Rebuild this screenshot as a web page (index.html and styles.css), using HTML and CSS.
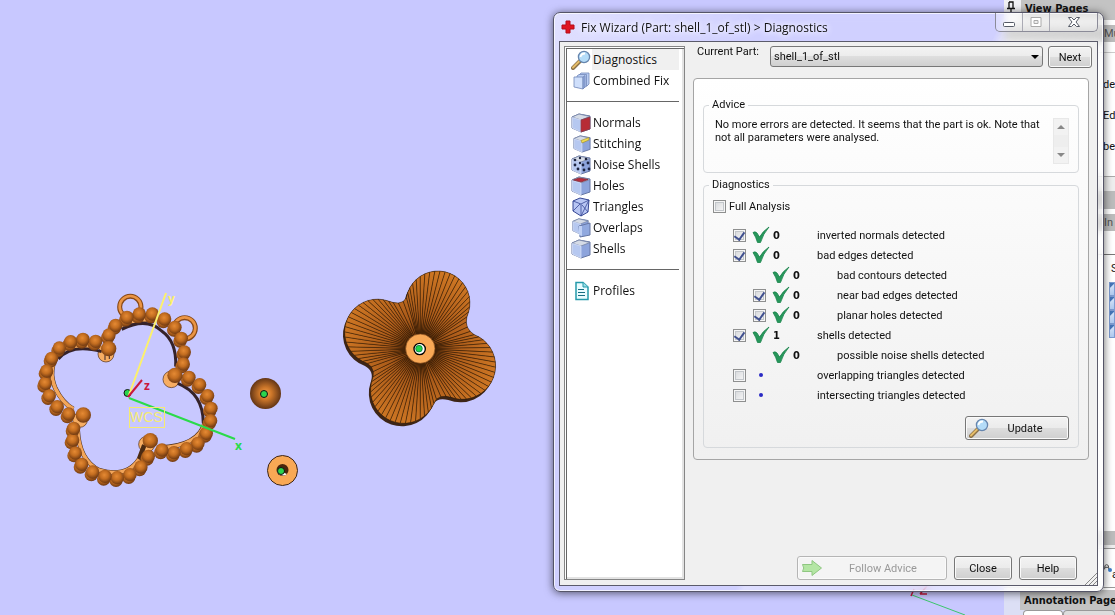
FILE: index.html
```
<!DOCTYPE html>
<html lang="en">
<head>
    <meta charset="UTF-8">
    <meta name="viewport" content="width=device-width, initial-scale=1.0">
    <title>Fix Wizard</title>
    <link rel="stylesheet" href="styles.css">
</head>
<body>
    <svg class="sprites" aria-hidden="true">
        <symbol id="magnifier" viewBox="0 0 20 20">
            <path d="M2 18 L9 11" stroke="#8a7048" stroke-width="4" stroke-linecap="round"/>
            <path d="M2 17.5 L8.5 11" stroke="#e6bd68" stroke-width="2" stroke-linecap="round"/>
            <circle cx="13" cy="7" r="5.6" fill="#b4dcf8" stroke="#6685ad" stroke-width="1.3"/>
            <path d="M9.5 7 Q10 3.5 14 3.5" stroke="#fff" stroke-width="1.8" fill="none"/>
        </symbol>
        <symbol id="cube" viewBox="0 0 20 20">
            <path d="M1 4 L8 1 L19 3 V16 L10 19 L1 15 Z" fill="#8da4dc" stroke="#6677a4"/>
            <path d="M1 4 L8 1 L19 3.5 L10 7 Z" fill="#d5dbe6" stroke="#7684a5" stroke-width=".8"/>
            <path d="M1.500 4.500 L10 7 V19 L1.500 15 Z" fill="#b6c8f0" stroke="#e8efff" stroke-width=".6"/>
        </symbol>
        <symbol id="check" viewBox="0 0 18 18">
            <path d="M1 6.500 Q3 5 5 7 L7.500 11 Q11 5 17 1 Q11 8 8.500 16.500 H5.500 Q4 11 1 6.500 Z" fill="#27975b" stroke="#16834a" stroke-width=".8"/>
        </symbol>
    </svg>

    <main class="workspace">
        <svg class="scene" role="img" aria-label="3D model view">
            <defs>
                <radialGradient id="bead" cx=".45" cy=".4" r=".6">
                    <stop offset="0" stop-color="#e58a34"/>
                    <stop offset=".5" stop-color="#c36d20"/>
                    <stop offset="1" stop-color="#713a12"/>
                </radialGradient>
                <radialGradient id="ball">
                    <stop offset="0" stop-color="#f5a04c"/>
                    <stop offset=".4" stop-color="#cc7629"/>
                    <stop offset="1" stop-color="#633515"/>
                </radialGradient>
                <radialGradient id="petal" gradientUnits="userSpaceOnUse" cx="556" cy="251" r="245">
                    <stop offset="0" stop-color="#572a08"/>
                    <stop offset=".4" stop-color="#ab5b1a"/>
                    <stop offset="1" stop-color="#d07824"/>
                </radialGradient>
            </defs>

            <!-- clover pendant made of beads -->
            <g transform="translate(30 265) scale(.3333)">
                <g fill="none" stroke="#874817" stroke-width="15">
                    <circle cx="301" cy="126" r="32"/>
                    <circle cx="464" cy="190" r="32"/>
                </g>
                <g fill="none" stroke="#ea9444" stroke-width="8">
                    <circle cx="301" cy="125" r="32"/>
                    <circle cx="464" cy="189" r="32"/>
                </g>
                <g fill="#f7ad62" stroke="#4b2a12" stroke-width="2">
                    <circle cx="228" cy="267" r="24"/>
                    <circle cx="424" cy="343" r="25"/>
                    <circle cx="350" cy="538" r="24"/>
                    <circle cx="150" cy="465" r="22"/>
                </g>
                <!-- thin dark edge, then the light inner wall -->
                <g fill="none" stroke="#4b2a12" stroke-width="14">
                    <path d="M85 265 Q52 315 76 370 Q98 415 130 432"/>
                    <path d="M143 495 Q147 585 208 616 Q290 640 327 583 L343 540"/>
                    <path d="M242 205 Q280 165 350 164"/>
                    <path d="M526 470 Q507 544 390 548"/>
                </g>
                <g fill="none" stroke="#f3a65a" stroke-width="11">
                    <path d="M85 265 Q52 315 76 370 Q98 415 130 432"/>
                    <path d="M143 495 Q147 585 208 616 Q290 640 327 583"/>
                    <path d="M242 205 Q280 165 350 164"/>
                    <path d="M526 470 Q507 544 390 548"/>
                    <path d="M85 262 Q140 232 215 248"/>
                </g>
                <g fill="none" stroke="#352229" stroke-width="9">
                    <path d="M85 282 Q125 235 215 260"/>
                    <path d="M275 193 Q350 155 395 198 Q441 230 437 305"/>
                    <path d="M443 355 Q520 385 520 475"/>
                    <path d="M225 270 V285 M238 265 V282" stroke-width="3"/>
                </g>
                <g id="beads"></g>
            </g>

            <!-- ribbed clover -->
            <g transform="translate(235 265) scale(.3333)">
                <use href="#clover" x="-5" y="9" fill="#3d2517"/>
                <path id="clover" fill="inherit" d="M460 108 Q500 124 514 99 A96 96 0 1 1 697 152 Q685 188 718 209 A98 98 0 1 1 645 396 Q612 388 600 408 A97 97 0 1 1 412 343 Q424 310 395 294 A98 98 0 1 1 460 108 Z"/>
                <g id="ribs"></g>
                <circle cx="556" cy="251" r="44" fill="#f8a855" stroke="#7c4519" stroke-width="2"/>
                <circle cx="554" cy="252" r="17" fill="#fff" stroke="#000" stroke-width="4"/>
                <circle cx="552" cy="251" r="10" fill="#21d44b" stroke="#063" stroke-width="2"/>
            </g>

            <circle cx="265.500" cy="393.500" r="15.500" fill="url(#ball)"/>
            <circle cx="264" cy="394" r="3.500" fill="#2ad44e" stroke="#111"/>
            <circle cx="282.500" cy="470.500" r="15" fill="#f8a855" stroke="#3d2517"/>
            <circle cx="282.500" cy="470" r="6" fill="#4a240c"/>
            <path d="M277 470 A6 6 0 0 0 287 474 Z" fill="#fff"/>
            <circle cx="281" cy="471" r="3.500" fill="#2ad44e" stroke="#111"/>

            <!-- axes -->
            <circle cx="127.500" cy="393" r="3.500" fill="#2ad44e" stroke="#111"/>
            <path d="M129 395 L166 293" stroke="#fdf16b" stroke-width="2"/>
            <path d="M129 398 L235 439" stroke="#2adb49" stroke-width="2"/>
            <path d="M128 397 L142 380" stroke="#c9183c" stroke-width="2"/>
            <rect x="129.500" y="407.500" width="35" height="20" fill="none" stroke="#f6eb72"/>
            <text x="130" y="422" class="wcs">WCS</text>
            <text x="168" y="303" class="axis axis-y">y</text>
            <text x="235" y="450" class="axis axis-x">x</text>
            <text x="144" y="390" class="axis axis-z">z</text>
            <path d="M912 595 L965 615" stroke="#3cc66c"/>
            <path d="M911 596 L914 589 M920 594 H927 M920 594 L927 586" stroke="#c9183c" fill="none" stroke-width="1.500"/>
        </svg>

        <aside class="pages">
            <div class="pages-head">
                <svg class="pin" viewBox="0 0 8 12"><path d="M2 1 H6 V7 M2 1 V7 M0 7.500 H8 M4 8 V12" fill="none" stroke="#111" stroke-width="1.300"/></svg>
                <h2>View Pages</h2>
            </div>
            <div class="tab">Mu</div>
            <ul class="options">
                <li>de</li>
                <li>Ed</li>
                <li>bec</li>
            </ul>
            <div class="band"></div>
            <div class="tab">In</div>
            <div class="column-head">S</div>
            <div class="thumbs"><i></i><i></i><i></i><i></i></div>
            <div class="band band-bottom"></div>
            <div class="tools">
                <svg class="tool" viewBox="0 0 12 12"><path d="M1 8 V5 Q1 1 4 1 T7 5 V8 M1 5 H7" fill="none" stroke="#555" stroke-width="1.500"/><circle cx="9" cy="9" r="3" fill="#3f7fc9"/></svg>
                <span>a</span>
            </div>
            <div class="pages-head annotation"><h2>Annotation Page</h2></div>
            <div class="annotation-tabs"><i></i><i></i></div>
        </aside>
    </main>

    <section class="dialog" aria-labelledby="dialog-title">
        <header class="titlebar">
            <svg class="cross" viewBox="0 0 14 14"><path d="M5 1 H9 V5 H13 V9 H9 V13 H5 V9 H1 V5 H5 Z" fill="#e01420" stroke="#b30d18" stroke-linejoin="round"/></svg>
            <h1 id="dialog-title">Fix Wizard (Part: shell_1_of_stl) &gt; Diagnostics</h1>
            <div class="window-buttons">
                <button type="button" aria-label="Minimize"><svg viewBox="0 0 14 12"><rect x="1.500" y="6.500" width="11" height="4" rx="1" fill="#fff" stroke="#555a66"/></svg></button>
                <button type="button" aria-label="Maximize" disabled><svg viewBox="0 0 14 12"><path d="M2 1.500 H12 V10.500 H2 Z M5 4.500 H9 V7.500 H5 Z" fill="#fff" stroke="#aaa" fill-rule="evenodd"/></svg></button>
                <button type="button" class="close" aria-label="Close window"><svg viewBox="0 0 14 12"><path d="M1.500 1.500 H4.500 L7 4 L9.500 1.500 H12.500 L9 6 L12.500 10.500 H9.500 L7 8 L4.500 10.500 H1.500 L5 6 Z" fill="#fff" stroke="#555a66"/></svg></button>
            </div>
        </header>

        <div class="client">
            <nav class="sidebar">
                <a href="#diagnostics" class="active"><svg viewBox="0 0 20 20"><use href="#magnifier"/></svg><span>Diagnostics</span></a>
                <a href="#combined">
                    <svg viewBox="0 0 20 20">
                        <g fill="#b9cdf3" stroke="#7288b9" stroke-width=".8">
                            <path d="M8 4 L10 2 H18 V13 L16 15 H8 Z"/>
                            <path d="M6 5 L8 3.500 H15.500 V15 L14 16.500 H6 Z"/>
                            <path d="M3 6 H12 V18 L3 16 Z" fill="#cfdffb"/>
                            <path d="M12 6 L14 4.500 V16 L12 18 Z" fill="#90a8dc"/>
                        </g>
                    </svg>
                    <span>Combined Fix</span>
                </a>
                <hr>
                <a href="#normals"><svg viewBox="0 0 20 20"><use href="#cube"/><path d="M10 7 L19 4 V16 L10 19 Z" fill="#b72c35" stroke="#8c3c4b" stroke-width=".8"/></svg><span>Normals</span></a>
                <a href="#stitching"><svg viewBox="0 0 20 20"><use href="#cube" x="2" y="1" width="18" height="18"/><path d="M10 6.500 L18 3.500 V6 L11 9 Z" fill="#f0dc54" stroke="#9c8828" stroke-width=".6"/></svg><span>Stitching</span></a>
                <a href="#noise"><svg viewBox="0 0 20 20"><use href="#cube"/><g fill="#1d2440"><circle cx="4" cy="5" r="1.300"/><circle cx="9" cy="3" r="1.200"/><circle cx="15" cy="4" r="1.300"/><circle cx="4" cy="10" r="1.400"/><circle cx="7" cy="14" r="1.400"/><circle cx="12" cy="10" r="1.400"/><circle cx="17" cy="8" r="1.400"/><circle cx="13" cy="15" r="1.400"/><circle cx="18" cy="14" r="1.400"/><circle cx="9" cy="8" r="1.200"/></g></svg><span>Noise Shells</span></a>
                <a href="#holes"><svg viewBox="0 0 20 20"><use href="#cube"/><path d="M2.500 4 L8 2 L17 3.500 L10 6 Z" fill="#b82c3b" stroke="#812b3b" stroke-width=".8"/></svg><span>Holes</span></a>
                <a href="#triangles"><svg viewBox="0 0 20 20"><path d="M2 4 L9 1 L18 3 L17 15 L10 19 L2 14 Z" fill="#b8c6f3" stroke="#354694"/><path d="M2 4 L10 7 L18 3 M10 7 V19 M2 14 L9 7 M11 8 L17 15 M10 19 L18 3" stroke="#354694" fill="none" stroke-width=".8"/></svg><span>Triangles</span></a>
                <a href="#overlaps"><svg viewBox="0 0 20 20"><use href="#cube" x="1" y="0" width="17" height="17"/><path d="M8 8 L19 5 V17 L9 19 Z" fill="#91a9df" stroke="#6677a4"/><path d="M8 8 L11 8 V18 L8 17 Z" fill="#bfd0f4"/></svg><span>Overlaps</span></a>
                <a href="#shells"><svg viewBox="0 0 20 20"><use href="#cube"/></svg><span>Shells</span></a>
                <hr>
                <a href="#profiles"><svg viewBox="0 0 20 20"><path d="M5 1.500 H12 L17 6 V18.500 H5 Z" fill="#e9fcff" stroke="#259aab" stroke-width="1.500"/><path d="M12 1.500 V6 H17" fill="#9ce0e8" stroke="#259aab"/><path d="M7 8.500 H13 M7 11.500 H14 M7 14.500 H14" stroke="#176e82" stroke-width="1.200"/></svg><span>Profiles</span></a>
            </nav>

            <div class="content">
                <div class="part-row">
                    <label for="part">Current Part:</label>
                    <div class="select-wrap">
                        <select id="part"><option>shell_1_of_stl</option></select>
                    </div>
                    <button type="button" class="btn">Next</button>
                </div>

                <div class="panel">
                    <fieldset>
                        <legend>Advice</legend>
                        <div class="advice">
                            <p>No more errors are detected. It seems that the part is ok. Note that not all parameters were analysed.</p>
                            <div class="scroller">
                                <button type="button" class="up" aria-label="Scroll up"></button>
                                <button type="button" class="down" aria-label="Scroll down"></button>
                            </div>
                        </div>
                    </fieldset>

                    <fieldset>
                        <legend>Diagnostics</legend>
                        <div class="full"><input type="checkbox" id="full"><label for="full">Full Analysis</label></div>
                        <ul class="results">
                            <li><input type="checkbox" id="normals" checked><svg viewBox="0 0 18 18"><use href="#check"/></svg><b>0</b><label for="normals">inverted normals detected</label></li>
                            <li><input type="checkbox" id="edges" checked><svg viewBox="0 0 18 18"><use href="#check"/></svg><b>0</b><label for="edges">bad edges detected</label></li>
                            <li class="sub"><i></i><svg viewBox="0 0 18 18"><use href="#check"/></svg><b>0</b><span>bad contours detected</span></li>
                            <li class="sub"><input type="checkbox" id="near" checked><svg viewBox="0 0 18 18"><use href="#check"/></svg><b>0</b><label for="near">near bad edges detected</label></li>
                            <li class="sub"><input type="checkbox" id="planar" checked><svg viewBox="0 0 18 18"><use href="#check"/></svg><b>0</b><label for="planar">planar holes detected</label></li>
                            <li><input type="checkbox" id="shells" checked><svg viewBox="0 0 18 18"><use href="#check"/></svg><b>1</b><label for="shells">shells detected</label></li>
                            <li class="sub"><i></i><svg viewBox="0 0 18 18"><use href="#check"/></svg><b>0</b><span>possible noise shells detected</span></li>
                            <li><input type="checkbox" id="overlapping"><i class="dot"></i><b></b><label for="overlapping">overlapping triangles detected</label></li>
                            <li><input type="checkbox" id="intersecting"><i class="dot"></i><b></b><label for="intersecting">intersecting triangles detected</label></li>
                        </ul>
                        <button type="button" class="btn update"><svg viewBox="0 0 20 20"><use href="#magnifier"/></svg><span>Update</span></button>
                    </fieldset>
                </div>

                <div class="actions">
                    <button type="button" class="btn follow" disabled>
                        <svg viewBox="0 0 22 18"><path d="M1.500 5.500 H11 V1.500 L20.500 9 L11 16.500 V12.500 H1.500 Q4 9 1.500 5.500 Z" fill="#b4e6a4" stroke="#8fc781"/></svg>
                        <span>Follow Advice</span>
                    </button>
                    <button type="button" class="btn">Close</button>
                    <button type="button" class="btn">Help</button>
                </div>
            </div>
            <svg class="grip" viewBox="0 0 12 12"><path d="M0 12 L12 0 M4 12 L12 4 M8 12 L12 8" stroke="#888"/></svg>
        </div>
    </section>

    <script>
        const SVG = 'http://www.w3.org/2000/svg';

        function add(parent, tag, attrs) {
            const el = document.createElementNS(SVG, tag);
            for (const key in attrs) {
                el.setAttribute(key, attrs[key]);
            }
            parent.appendChild(el);
        }

        // bead centres: x, y and a radius for the big corner ones
        const beads = [
            [328, 147], [367, 147], [404, 162], [435, 187], [454, 220], [463, 261], [460, 297],
            [477, 337], [509, 359], [533, 392], [543, 430], [542, 467], [529, 505],
            [504, 535], [470, 551], [432, 563], [396, 555], [355, 574], [333, 606], [300, 629],
            [262, 638], [225, 634], [188, 621], [155, 598], [136, 564], [128, 525], [131, 490],
            [116, 447], [82, 425], [58, 392], [46, 355], [50, 318], [65, 280],
            [88, 249], [122, 230], [159, 223], [197, 229], [237, 210], [257, 181], [291, 157],
            [435, 331, 23], [361, 527, 23], [160, 450, 23], [236, 251, 23]
        ];
        const beadGroup = document.getElementById('beads');
        beads.forEach(([x, y, r]) => {
            if (!r) add(beadGroup, 'circle', { cx: x - 4, cy: y + 8, r: 20, fill: 'url(#bead)' });
        });
        beads.forEach(([x, y, r]) => {
            add(beadGroup, 'circle', { cx: x, cy: y, r: r || 20, fill: 'url(#bead)' });
        });

        // ribs run from the hub to evenly spaced points of the outline
        const clover = document.getElementById('clover');
        const ribs = document.getElementById('ribs');
        const count = 96;
        const step = clover.getTotalLength() / count;
        for (let i = 0; i < count; i++) {
            const a = clover.getPointAtLength(i * step);
            const b = clover.getPointAtLength((i + 1) * step);
            add(ribs, 'path', {
                d: `M556 251 L${a.x} ${a.y} L${b.x} ${b.y} Z`,
                fill: 'url(#petal)',
                stroke: '#241203',
                'stroke-width': 1.3
            });
        }
    </script>
</body>
</html>
```
FILE: styles.css
```
* {
    box-sizing: border-box;
}
body {
    margin: 0;
    height: 100vh;
    position: relative;
    overflow: hidden;
    background: #c8c8ff;
    color: #111;
    font-family: Roboto, "DejaVu Sans Condensed", sans-serif;
    font-size: 11px;
}
h1, h2, p, ul {
    margin: 0;
    padding: 0;
}
ul {
    list-style: none;
}
button, select, input {
    font: inherit;
    color: inherit;
    margin: 0;
}
.sprites {
    display: none;
}

/* model view */
.workspace {
    display: flex;
    height: 100%;
}
.scene {
    flex: 1;
    min-width: 0;
    height: 100%;
    background: #c8c8ff;
}
.axis {
    font: bold 12px "Open Sans", sans-serif;
}
.axis-x {
    fill: #2adb49;
}
.axis-y {
    fill: #fdf16b;
}
.axis-z {
    fill: #c9183c;
}
.wcs {
    font: 14px "Liberation Sans", sans-serif;
    fill: #f6eb72;
}

/* docked pages on the right */
.pages {
    display: flex;
    flex-direction: column;
    width: 111px;
    background: #fff;
    overflow: hidden;
}
.pages-head {
    display: flex;
    height: 20px;
    background: #f0f0f4;
}
.pages-head h2 {
    flex: 1;
    padding-left: 4px;
    background: #c3c3c3;
    font: bold 11px "DejaVu Sans Condensed", sans-serif;
    line-height: 18px;
    white-space: nowrap;
}
.pin {
    width: 8px;
    height: 12px;
    margin: 1px 6px 0 3px;
}
.tab {
    height: 17px;
    margin-top: 5px;
    padding-left: 100px;
    background: #bcbcbc;
    color: #555;
    line-height: 17px;
}
.options {
    margin-top: 10px;
    padding: 16px 0 14px 99px;
    border-top: 1px solid #ccc;
    border-bottom: 1px solid #aaa;
}
.options li {
    line-height: 31px;
}
.band {
    height: 32px;
    border: solid #eee;
    border-width: 14px 0 0;
    background: #bcbcbc;
}
.column-head {
    margin-top: 23px;
    padding-left: 107px;
    border-top: 1px solid #777;
    line-height: 27px;
}
.thumbs {
    padding-left: 105px;
}
.thumbs i {
    display: block;
    height: 14px;
    border: 1px solid #7d9bd0;
    background: linear-gradient(135deg, #4675b8 30%, #d2e2fa 32%, #a9c6ef);
}
.band-bottom {
    height: 17px;
    margin-top: auto;
    border-width: 0 0 3px;
}
.tools {
    display: flex;
    align-items: center;
    height: 40px;
    padding-left: 100px;
    border-top: 1px solid #999;
    border-bottom: 1px solid #999;
}
.tools span {
    margin-top: 12px;
}
.tool {
    flex: none;
    width: 8px;
    height: 12px;
}
.annotation {
    margin-top: 2px;
    padding-left: 16px;
    background: #dcdff5;
}
.annotation h2 {
    line-height: 21px;
}
.annotation-tabs {
    display: flex;
    height: 5px;
    padding-left: 19px;
    background: #dcdff5;
}
.annotation-tabs i {
    width: 40px;
    border: 1px solid #999;
    border-bottom: 0;
    border-radius: 4px 4px 0 0;
    background: #fff;
}
.annotation-tabs i + i {
    flex: 1;
    background: #ddd;
}

/* wizard window */
.dialog {
    position: absolute;
    top: 12px;
    right: 11px;
    bottom: 23px;
    left: 553px;
    display: flex;
    flex-direction: column;
    padding: 0 5px 5px;
    border: 1px solid #555568;
    border-radius: 7px;
    background: linear-gradient(115deg, rgba(255, 255, 255, .45) 0, rgba(255, 255, 255, .15) 25%, rgba(255, 255, 255, .15) 55%, rgba(255, 255, 255, .4) 56%, rgba(255, 255, 255, .3) 70%, rgba(255, 255, 255, .8) 100%);
    backdrop-filter: blur(4px);
    box-shadow: 0 1px 9px rgba(0, 0, 0, .6), inset 0 0 0 1px rgba(255, 255, 255, .7);
}
.titlebar {
    display: flex;
    align-items: center;
    height: 28px;
    padding-left: 2px;
}
.titlebar h1 {
    flex: 1;
    font: 12px "Open Sans", sans-serif;
    text-shadow: 0 0 6px #fff, 0 0 6px #fff;
}
.cross {
    width: 14px;
    height: 14px;
    margin-right: 6px;
}
.window-buttons {
    display: flex;
    align-self: flex-start;
    height: 19px;
    border: 1px solid #8b8b98;
    border-top: 0;
    border-radius: 0 0 5px 5px;
    overflow: hidden;
}
.window-buttons button {
    width: 27px;
    padding: 2px 0 0;
    border: 0;
    border-right: 1px solid #aaaab4;
    background: rgba(255, 255, 255, .25);
}
.window-buttons .close {
    width: 47px;
    border-right: 0;
}
.window-buttons svg {
    width: 14px;
    height: 12px;
}
.client {
    position: relative;
    display: flex;
    flex: 1;
    min-height: 0;
    padding: 4px 4px 5px;
    border: 1px solid #5b5b6b;
    background: #f0f0f0;
}

.sidebar {
    width: 121px;
    padding: 2px 5px 0 0;
    border: 1px solid #858585;
    box-shadow: inset 1px 1px #fff, inset 2px 2px #666, inset -2px -2px #e3e3e3;
    background: #fff;
    font: 12px "Open Sans", sans-serif;
}
.sidebar a {
    display: flex;
    align-items: center;
    height: 21px;
    padding-left: 6px;
    color: #111;
    text-decoration: none;
}
.sidebar svg {
    width: 20px;
    height: 20px;
    margin-right: 1px;
}
.sidebar span {
    flex: 1;
    padding-left: 1px;
    line-height: 21px;
    white-space: nowrap;
}
.sidebar .active span {
    background: #f0f0f0;
}
.sidebar hr {
    height: 1px;
    margin: 10px 0 10px 2px;
    border: 0;
    background: #666;
}

.content {
    display: flex;
    flex: 1;
    flex-direction: column;
    min-width: 0;
    padding: 0 1px 0 8px;
}
.part-row {
    display: flex;
    align-items: flex-start;
    padding-left: 4px;
}
.part-row label {
    width: 73px;
    line-height: 12px;
}
.select-wrap {
    position: relative;
    flex: 1;
    margin-right: 5px;
}
.select-wrap::after {
    content: "";
    position: absolute;
    top: 9px;
    right: 4px;
    border: 4px solid transparent;
    border-top-color: #000;
    border-bottom: 0;
    pointer-events: none;
}
select {
    width: 100%;
    height: 21px;
    padding: 0 3px;
    border: 1px solid #777;
    border-radius: 3px;
    background: linear-gradient(#f3f3f3 0, #ececec 49%, #dedede 50%, #d0d0d0 100%);
    appearance: none;
}
.btn {
    height: 24px;
    padding: 0 3px;
    border: 1px solid #777;
    border-radius: 3px;
    box-shadow: inset 0 0 0 1px #fafafa;
    background: linear-gradient(#f3f3f3 0, #ebebeb 49%, #dddddd 50%, #cfcfcf 100%);
}
.part-row .btn {
    width: 44px;
    height: 22px;
}

.panel {
    margin: 10px 3px 0 0;
    padding: 19px 9px 11px;
    border: 1px solid #a5a5a5;
    border-radius: 4px;
    background: linear-gradient(#fff, #f0f0f0);
}
fieldset {
    min-width: 0;
    margin: 0;
    padding: 0 9px 7px;
    border: 1px solid #d6d9dc;
    border-radius: 4px;
}
fieldset + fieldset {
    margin-top: 5px;
}
legend {
    margin-left: -4px;
    padding: 0 3px;
    line-height: 14px;
}
.advice {
    display: flex;
    justify-content: space-between;
    padding: 6px 0 1px 2px;
}
.advice p {
    flex: 1;
    line-height: 13px;
}
.scroller {
    display: flex;
    flex-direction: column;
    justify-content: space-between;
    width: 16px;
    height: 46px;
    margin-left: 4px;
    border: 1px solid #e8e8e8;
    background: #eee;
}
.scroller button {
    height: 16px;
    padding: 0;
    border: 0;
    background: #f2f2f2;
}
.scroller button::before {
    content: "";
    display: block;
    width: 0;
    margin: 0 auto;
    border: 4px solid transparent;
}
.scroller .up::before {
    border-top: 0;
    border-bottom-color: #888;
}
.scroller .down::before {
    border-top-color: #888;
    border-bottom: 0;
}
input[type="checkbox"] {
    display: grid;
    place-items: center;
    width: 13px;
    height: 13px;
    border: 1px solid #8e8f8f;
    box-shadow: inset 0 0 0 1px #f6f6f6, inset 0 0 0 2px #c2c6ca;
    background: linear-gradient(135deg, #d3d5d8, #fafafa);
    appearance: none;
}
input[type="checkbox"]:checked::before {
    content: "";
    width: 5px;
    height: 8px;
    margin-bottom: 2px;
    border: solid #40508f;
    border-width: 0 2px 2px 0;
    transform: rotate(35deg);
}
.full {
    display: flex;
    align-items: center;
    gap: 3px;
    height: 20px;
    margin-top: 4px;
}
.results {
    margin: 9px 0 11px;
    padding-left: 20px;
}
.results li {
    display: grid;
    grid-template-columns: 19px 21px 44px 1fr;
    align-items: center;
    height: 20px;
}
.results .sub {
    padding-left: 20px;
}
.results svg {
    width: 18px;
    height: 18px;
}
.results b {
    font-family: "DejaVu Sans Condensed", sans-serif;
}
.dot {
    width: 4px;
    height: 4px;
    margin-left: 7px;
    border-radius: 2px;
    background: #2a2ac4;
}
.update {
    display: flex;
    align-items: center;
    width: 104px;
    margin-left: auto;
}
.btn span {
    flex: 1;
    text-align: center;
}
.update svg {
    width: 20px;
    height: 20px;
}
.update span {
    padding-right: 4px;
}
.actions {
    display: flex;
    gap: 7px;
    justify-content: flex-end;
    margin-top: auto;
    padding-right: 15px;
}
.actions .btn {
    width: 58px;
}
.actions .follow {
    display: flex;
    align-items: center;
    width: 150px;
    border-color: #b5b5b5;
    background: #f4f4f4;
    color: #999;
}
.follow svg {
    width: 22px;
    height: 18px;
}
.grip {
    position: absolute;
    right: 0;
    bottom: 0;
    width: 12px;
    height: 12px;
}
```
